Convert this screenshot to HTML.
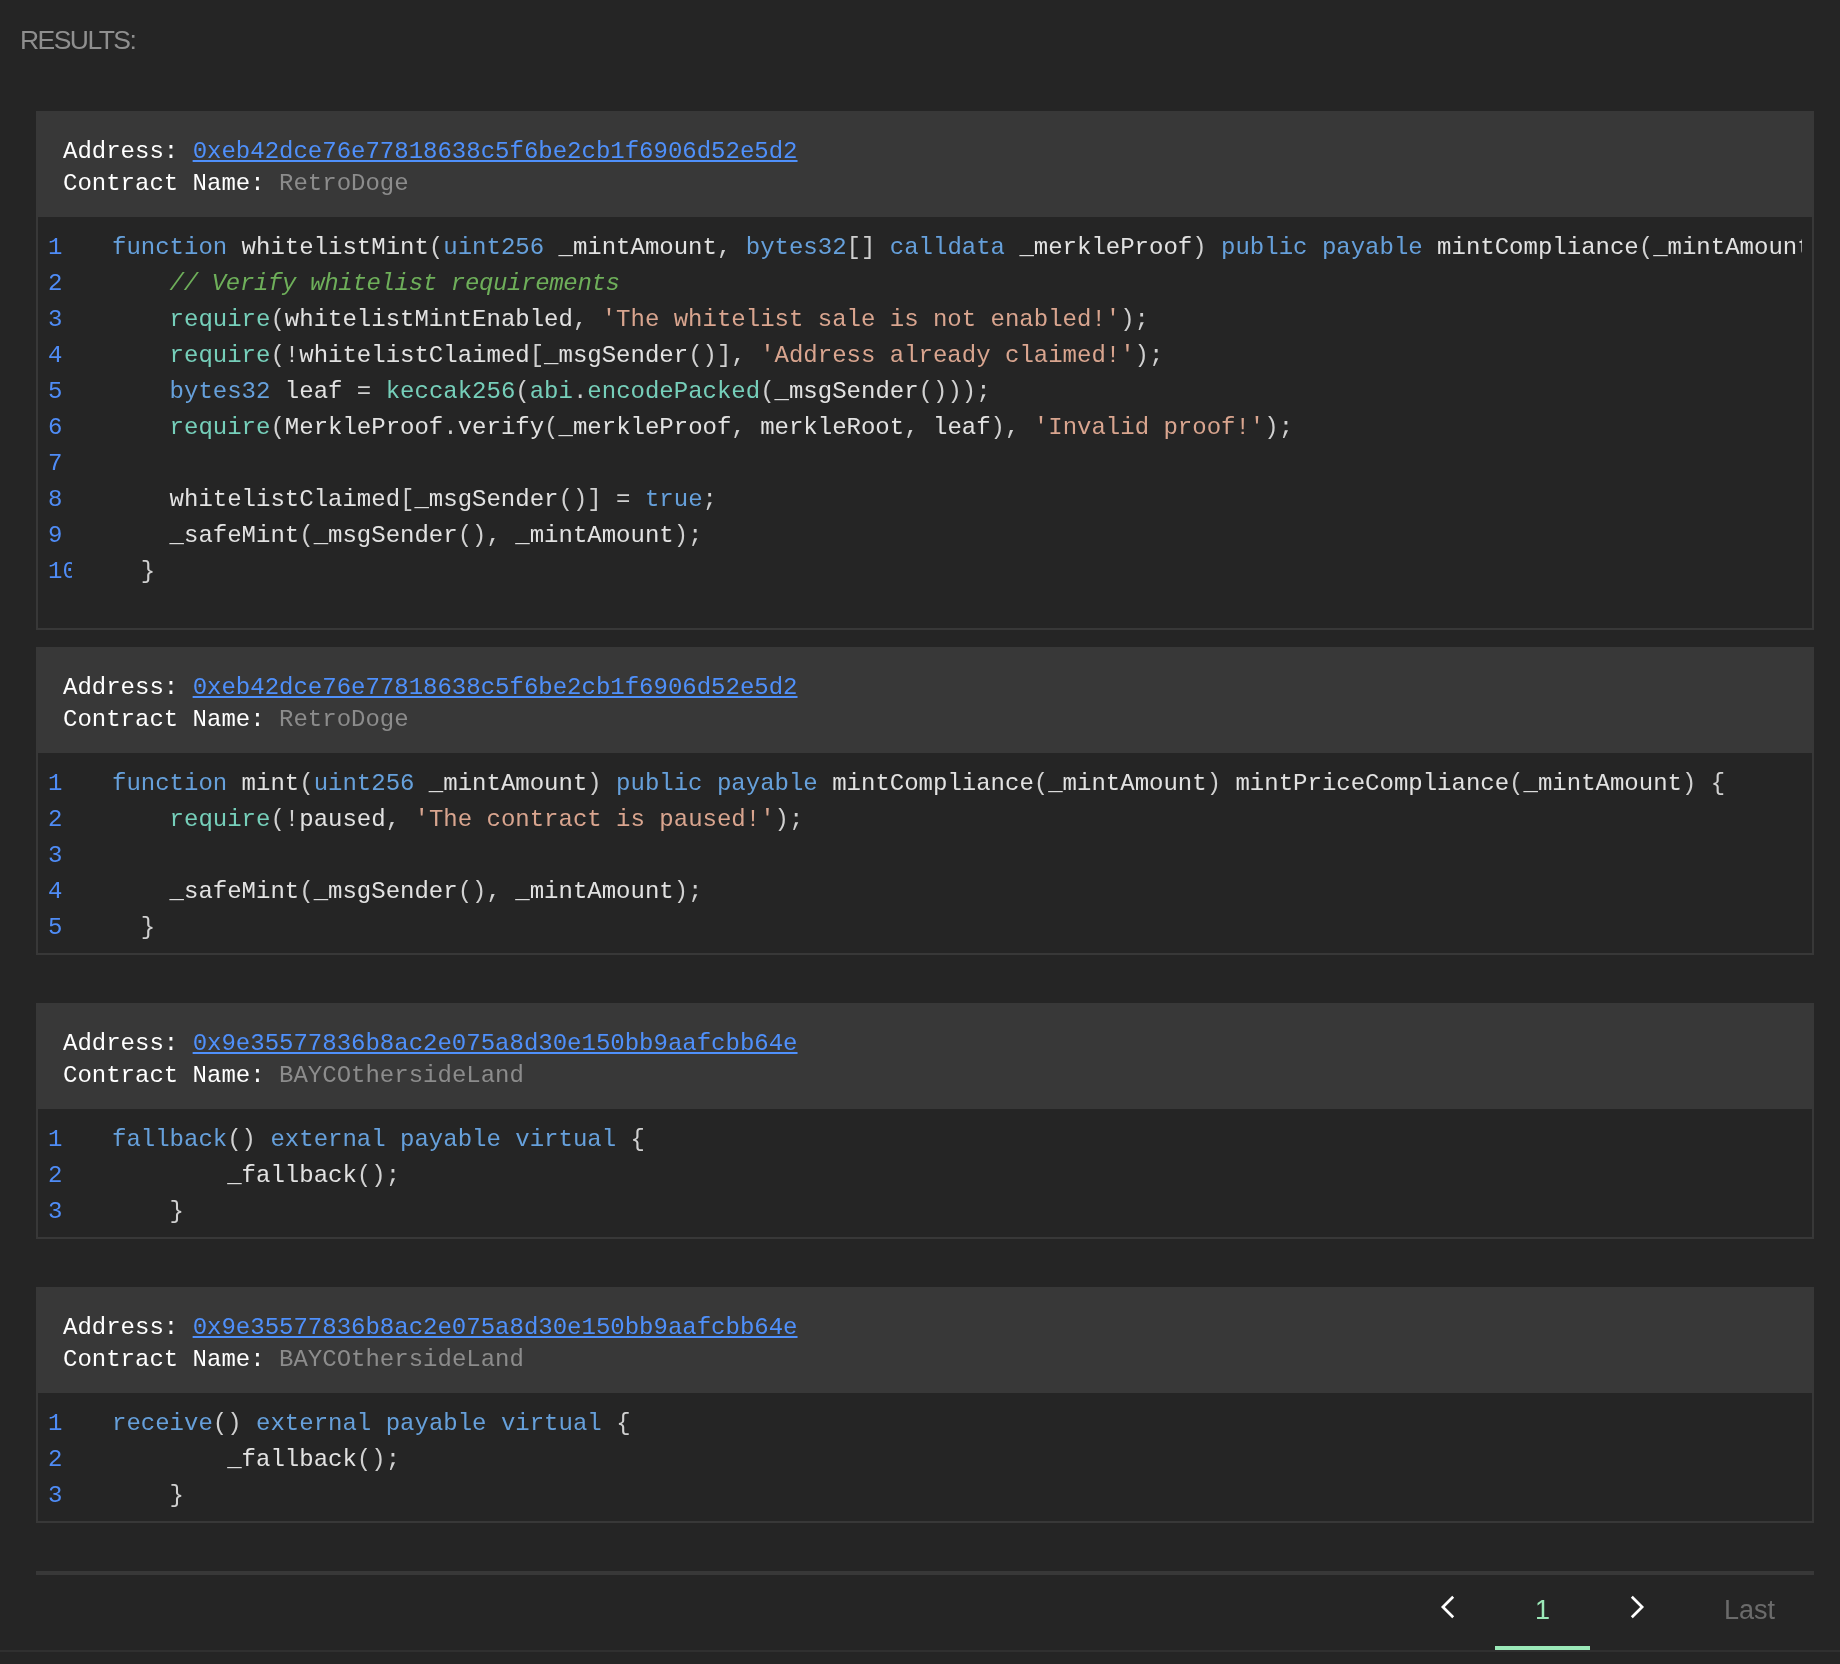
<!DOCTYPE html>
<html lang="en">
<head>
<meta charset="utf-8">
<title>Results</title>
<style>
  html, body { margin: 0; padding: 0; }
  body {
    width: 1840px; height: 1664px; overflow: hidden; position: relative;
    background: #252525; color: #ffffff;
    font-family: "Liberation Sans", sans-serif;
  }
  .root { position: absolute; left: 0; top: 0; width: 1840px; height: 1664px; transform: translateZ(0); will-change: transform; }
  .title {
    position: absolute; left: 20px; top: 24px;
    font-size: 26.5px; line-height: 32px; letter-spacing: -1.55px;
    color: #8f8f8f; white-space: nowrap;
  }
  .card { position: absolute; left: 36px; width: 1778px; }
  .head {
    height: 106px; background: #383838; box-sizing: border-box;
    padding: 25px 0 0 27px;
    font-family: "Liberation Mono", monospace; font-size: 24px; line-height: 32px;
    white-space: pre; color: #ffffff;
  }
  .head a { color: #4f90fb; text-decoration: underline; text-decoration-thickness: 2px; text-underline-offset: 2px; }
  .head .nm { color: #8c8c8c; }
  .code {
    box-sizing: border-box; border: 2px solid #383838; border-top: 0;
    padding: 13px 10px 0 10px; background: #252525;
    display: flex; overflow: hidden;
    font-family: "Liberation Mono", monospace; font-size: 24px; line-height: 36px;
    white-space: pre; color: #e2e2e2;
  }
  .ln { width: 24px; flex: none; overflow: hidden; color: #4f8cf6; margin-right: 40px; }
  .src { flex: 1 1 auto; overflow: hidden; min-width: 0; }
  .k { color: #66a0db; }
  .b { color: #76cfba; }
  .s { color: #d9a58f; }
  .c { color: #6eaf5a; font-style: italic; letter-spacing: -0.34px; }
  .p { color: #d0d0d0; }
  .hr { position: absolute; left: 36px; top: 1571px; width: 1778px; height: 4px; background: #383838; }
  .foot { position: absolute; left: 0; top: 1650px; width: 1840px; height: 2px; background: #303030; }
  .pg { position: absolute; top: 1575px; height: 75px; font-size: 27px; line-height: 32px; text-align: center; }
  .pg span { position: absolute; left: 0; right: 0; top: 19px; }
  .pg svg { position: absolute; }
  .act { border-bottom: 4px solid #9be9b8; color: #9be9b8; box-sizing: border-box; }
  .last { color: #6b6b6b; }
</style>
</head>
<body>
<div class="root">
<div class="title">RESULTS:</div>

<div class="card" style="top:111px">
<div class="head">Address: <a>0xeb42dce76e77818638c5f6be2cb1f6906d52e5d2</a>
Contract Name: <span class="nm">RetroDoge</span></div>
<div class="code" style="height:413px"><div class="ln">1
2
3
4
5
6
7
8
9
10</div><div class="src"><span class="k">function</span> whitelistMint<span class="p">(</span><span class="k">uint256</span> _mintAmount<span class="p">,</span> <span class="k">bytes32</span><span class="p">[]</span> <span class="k">calldata</span> _merkleProof<span class="p">)</span> <span class="k">public</span> <span class="k">payable</span> mintCompliance<span class="p">(</span>_mintAmount<span class="p">)</span> mintPriceCompliance<span class="p">(</span>_mintAmount<span class="p">)</span> <span class="p">{</span>
    <span class="c">// Verify whitelist requirements</span>
    <span class="b">require</span><span class="p">(</span>whitelistMintEnabled<span class="p">,</span> <span class="s">'The whitelist sale is not enabled!'</span><span class="p">);</span>
    <span class="b">require</span><span class="p">(!</span>whitelistClaimed<span class="p">[</span>_msgSender<span class="p">()],</span> <span class="s">'Address already claimed!'</span><span class="p">);</span>
    <span class="k">bytes32</span> leaf <span class="p">=</span> <span class="b">keccak256</span><span class="p">(</span><span class="b">abi</span><span class="p">.</span><span class="b">encodePacked</span><span class="p">(</span>_msgSender<span class="p">()));</span>
    <span class="b">require</span><span class="p">(</span>MerkleProof<span class="p">.</span>verify<span class="p">(</span>_merkleProof<span class="p">,</span> merkleRoot<span class="p">,</span> leaf<span class="p">),</span> <span class="s">'Invalid proof!'</span><span class="p">);</span>

    whitelistClaimed<span class="p">[</span>_msgSender<span class="p">()]</span> <span class="p">=</span> <span class="k">true</span><span class="p">;</span>
    _safeMint<span class="p">(</span>_msgSender<span class="p">(),</span> _mintAmount<span class="p">);</span>
  <span class="p">}</span></div></div>
</div>

<div class="card" style="top:647px">
<div class="head">Address: <a>0xeb42dce76e77818638c5f6be2cb1f6906d52e5d2</a>
Contract Name: <span class="nm">RetroDoge</span></div>
<div class="code" style="height:202px"><div class="ln">1
2
3
4
5</div><div class="src"><span class="k">function</span> mint<span class="p">(</span><span class="k">uint256</span> _mintAmount<span class="p">)</span> <span class="k">public</span> <span class="k">payable</span> mintCompliance<span class="p">(</span>_mintAmount<span class="p">)</span> mintPriceCompliance<span class="p">(</span>_mintAmount<span class="p">)</span> <span class="p">{</span>
    <span class="b">require</span><span class="p">(!</span>paused<span class="p">,</span> <span class="s">'The contract is paused!'</span><span class="p">);</span>

    _safeMint<span class="p">(</span>_msgSender<span class="p">(),</span> _mintAmount<span class="p">);</span>
  <span class="p">}</span></div></div>
</div>

<div class="card" style="top:1003px">
<div class="head">Address: <a>0x9e35577836b8ac2e075a8d30e150bb9aafcbb64e</a>
Contract Name: <span class="nm">BAYCOthersideLand</span></div>
<div class="code" style="height:130px"><div class="ln">1
2
3</div><div class="src"><span class="k">fallback</span><span class="p">()</span> <span class="k">external</span> <span class="k">payable</span> <span class="k">virtual</span> <span class="p">{</span>
        _fallback<span class="p">();</span>
    <span class="p">}</span></div></div>
</div>

<div class="card" style="top:1287px">
<div class="head">Address: <a>0x9e35577836b8ac2e075a8d30e150bb9aafcbb64e</a>
Contract Name: <span class="nm">BAYCOthersideLand</span></div>
<div class="code" style="height:130px"><div class="ln">1
2
3</div><div class="src"><span class="k">receive</span><span class="p">()</span> <span class="k">external</span> <span class="k">payable</span> <span class="k">virtual</span> <span class="p">{</span>
        _fallback<span class="p">();</span>
    <span class="p">}</span></div></div>
</div>

<div class="hr"></div>

<div class="pg" style="left:1400px;width:95px"><svg style="left:35px;top:15px" width="26" height="34" viewBox="1435 1590 26 34"><polyline points="1453.2,1596.8 1442.9,1607 1453.2,1617.2" fill="none" stroke="#ffffff" stroke-width="2.7" stroke-linejoin="miter" stroke-linecap="butt"/></svg></div>
<div class="pg act" style="left:1495px;width:95px"><span>1</span></div>
<div class="pg" style="left:1590px;width:95px"><svg style="left:34px;top:15px" width="26" height="34" viewBox="1624 1590 26 34"><polyline points="1631.8,1596.8 1642.1,1607 1631.8,1617.2" fill="none" stroke="#ffffff" stroke-width="2.7" stroke-linejoin="miter" stroke-linecap="butt"/></svg></div>
<div class="pg last" style="left:1685px;width:129px"><span>Last</span></div>

<div class="foot"></div>
</div>
</body>
</html>
